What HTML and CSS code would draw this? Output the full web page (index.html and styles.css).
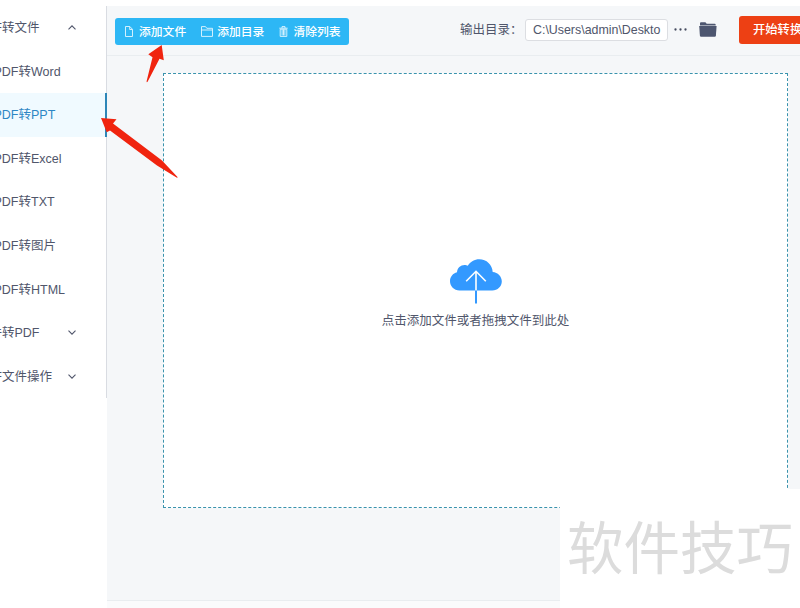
FILE: index.html
```html
<!DOCTYPE html>
<html lang="zh-CN">
<head>
    <meta charset="UTF-8">
    <meta name="viewport" content="width=device-width, initial-scale=1.0">
    <title>PDF转换器</title>
    <link rel="stylesheet" href="styles.css">
</head>
<body>
    <div class="app">
        <!-- Sidebar -->
        <div class="sidebar">
            <div class="menu">
                <div class="menu-title"><span>PDF转文件</span>
                    <svg class="chevron" viewBox="0 0 8 5"><path d="M0.5 4.3L4 0.8l3.5 3.5"/></svg>
                </div>
                <div class="menu-item">PDF转Word</div>
                <div class="menu-item active">PDF转PPT</div>
                <div class="menu-item">PDF转Excel</div>
                <div class="menu-item">PDF转TXT</div>
                <div class="menu-item">PDF转图片</div>
                <div class="menu-item">PDF转HTML</div>
                <div class="menu-title"><span>文件转PDF</span>
                    <svg class="chevron" viewBox="0 0 8 5"><path d="M0.5 0.7L4 4.2l3.5-3.5"/></svg>
                </div>
                <div class="menu-title"><span>PDF文件操作</span>
                    <svg class="chevron" viewBox="0 0 8 5"><path d="M0.5 0.7L4 4.2l3.5-3.5"/></svg>
                </div>
            </div>
        </div>

        <div class="main">
            <!-- Toolbar -->
            <div class="toolbar">
                <div class="btn-group">
                    <div class="btn">
                        <svg width="8" height="11" viewBox="0 0 8 11"><path d="M0.5 0.5h4.3l2.7 2.8v7.2h-7zM4.7 0.7v2.8h2.7"/></svg>
                        <span>添加文件</span>
                    </div>
                    <div class="btn">
                        <svg width="12" height="11" viewBox="0 0 12 11"><path d="M0.5 10.4V0.6h4l1.3 1.7h5.7v8.1zM0.5 4h11"/></svg>
                        <span>添加目录</span>
                    </div>
                    <div class="btn">
                        <svg width="9" height="11" viewBox="0 0 9 11"><path d="M0.3 2.2h8.4M3 2V0.6h3V2M1.2 3.2v7.2h6.6V3.2zM3.1 3.5v6M4.5 3.5v6M5.9 3.5v6"/></svg>
                        <span>清除列表</span>
                    </div>
                </div>
                <div class="output">
                    <span class="output-label">输出目录：</span>
                    <div class="output-path">C:\Users\admin\Deskto</div>
                    <svg class="dots" width="13" height="3" viewBox="0 0 13 3"><circle cx="1.5" cy="1.5" r="1.15"/><circle cx="6.5" cy="1.5" r="1.15"/><circle cx="11.5" cy="1.5" r="1.15"/></svg>
                    <svg class="folder" width="18" height="15" viewBox="0 0 18 15"><path d="M1 3.4V1.2Q1 0.2 2 0.2h4.4l1.3 1.5h8q1 0 1 1v0.700H1z"/><path d="M0.2 4h17.4l-0.7 9.500q-0.1 1.2-1.2 1.2H2.1q-1.1 0-1.2-1.2z"/></svg>
                    <div class="start-btn">开始转换</div>
                </div>
            </div>

            <!-- Drop area -->
            <div class="content">
                <div class="dropzone">
                    <svg class="cloud" width="52" height="45" viewBox="0 0 52 45">
                        <path class="cloud-body" d="M9.5 31.5C4 31.5 0 27.2 0 22.3c0-4.5 3-8 7-9C7.300 8.500 11.500 5.300 16.300 6.300c0.600 0.100 1 0.300 1.500 0.500C20.300 2.800 24.500 0.300 29.300 0.300c7.200 0 13 5.500 13.400 12.600C47.800 13.300 51.800 17.300 51.800 22.300c0 5.200-4.200 9.200-9.500 9.200z"/>
                        <path class="cloud-stem" d="M26 31v13.500"/>
                        <path class="cloud-arrow" d="M26 12.500V31.500M16.200 22.300L26 12.300l9.800 10"/>
                    </svg>
                    <p>点击添加文件或者拖拽文件到此处</p>
                </div>
            </div>
            <div class="footer"></div>
        </div>
    </div>

    <!-- Pointer arrows -->
    <svg class="pointers" width="800" height="608" viewBox="0 0 800 608">
        <path d="M161.700 45l2.100 15.300-4.300-1.500L147.600 81.800q-1 1-1-0.500L152.500 57.200l-4.200-2.900z"/>
        <path d="M101 118l15.500 1.200-3.500 4.200L162 160.500l15.500 16.500q0.300 1-1 0.500L157 165.500 110 130.500l-3.300 1.800z"/>
    </svg>

    <div class="watermark">软件技巧</div>
</body>
</html>
```

FILE: styles.css
```css
* {
    margin: 0;
    padding: 0;
    box-sizing: border-box;
}

body {
    width: 800px;
    height: 608px;
    overflow: hidden;
    position: relative;
    background: #fff;
    color: #50566b;
    font-family: "Liberation Sans", "Noto Sans CJK SC", sans-serif;
    font-size: 12.5px;
}

svg {
    display: block;
    flex-shrink: 0;
}

.app {
    display: flex;
    height: 608px;
    padding-top: 6px;
}

/* Sidebar */
.sidebar {
    width: 107px;
    flex-shrink: 0;
    overflow: hidden;
}

.menu {
    border-right: 1px solid #d9dce2;
}

.menu-title, .menu-item {
    display: flex;
    align-items: center;
    height: 43.55px;
    padding-bottom: 2px;
    white-space: nowrap;
}

.menu-title {
    justify-content: space-between;
    padding-right: 30px;
}

.menu-title span {
    margin-left: -23px;
}

.menu-item {
    text-indent: -6.5px;
}

.menu-item.active {
    margin-right: -1px;
    background: #f0faff;
    border-right: 2px solid #2d86b8;
    color: #2d86c4;
}

.chevron {
    width: 8px;
    height: 5px;
    margin-top: 2px;
    fill: none;
    stroke: #50566b;
    stroke-width: 1.1;
}

/* Main */
.main {
    flex: 1;
    min-width: 0;
    display: flex;
    flex-direction: column;
    background: #f5f7f9;
}

.toolbar {
    height: 51px;
    display: flex;
    justify-content: space-between;
    padding-left: 8px;
    border-bottom: 1px solid #e9edf0;
}

.btn-group {
    display: flex;
    gap: 15px;
    width: 234px;
    height: 27px;
    margin-top: 12px;
    padding-left: 10px;
    background: #2db7f5;
    border-radius: 3px;
    color: #fff;
    font-size: 11.8px;
    font-weight: 500;
}

.btn {
    display: flex;
    align-items: center;
    gap: 4px;
    padding-bottom: 3px;
    white-space: nowrap;
}

.btn:first-child {
    gap: 6px;
}

.btn:last-child {
    gap: 5px;
}

.btn svg {
    margin-top: 2px;
    fill: none;
    stroke: #e4f6ff;
    stroke-width: 0.9;
}

.output {
    width: 340px;
    height: 47px;
    display: flex;
    align-items: center;
    overflow: hidden;
    white-space: nowrap;
}

.output-label {
    width: 65px;
    flex-shrink: 0;
    padding-bottom: 2px;
}

.output-path {
    width: 143px;
    height: 22px;
    flex-shrink: 0;
    padding-left: 7px;
    background: #fff;
    border: 1px solid #dcdee2;
    border-radius: 3px;
    font-size: 12.4px;
    line-height: 20px;
}

.dots {
    margin-left: 6px;
    fill: #454b60;
}

.folder {
    margin-left: 12px;
    fill: #4d5670;
}

.start-btn {
    width: 90px;
    height: 28px;
    flex-shrink: 0;
    margin-left: 22px;
    padding-left: 14px;
    background: #ed4014;
    border-radius: 3px;
    color: #fff;
    font-size: 12.3px;
    font-weight: 500;
    line-height: 28px;
}

.content {
    flex: 1;
    padding: 17px 12px 92px 56px;
}

.dropzone {
    height: 435px;
    display: flex;
    flex-direction: column;
    align-items: center;
    padding-top: 185px;
    background: #fff;
    border: 1px dashed #3a93ad;
}

.dropzone p {
    margin-top: 8px;
    line-height: 18px;
}

.cloud-body {
    fill: #3399ff;
}

.cloud-stem {
    stroke: #3399ff;
    stroke-width: 2;
}

.cloud-arrow {
    fill: none;
    stroke: #fff;
    stroke-width: 1.6;
}

.footer {
    height: 8px;
    flex-shrink: 0;
    background: #fafbfc;
    border-top: 1px solid #e9edf0;
}

/* Overlays */
.pointers {
    position: absolute;
    left: 0;
    top: 0;
    fill: #f0240f;
}

.watermark {
    position: absolute;
    left: 560px;
    top: 489px;
    width: 240px;
    height: 119px;
    padding-left: 7px;
    background: #fff;
    color: #dcdcdc;
    font-family: "Noto Sans CJK SC", sans-serif;
    font-size: 56.5px;
    line-height: 111px;
    white-space: nowrap;
}
```
